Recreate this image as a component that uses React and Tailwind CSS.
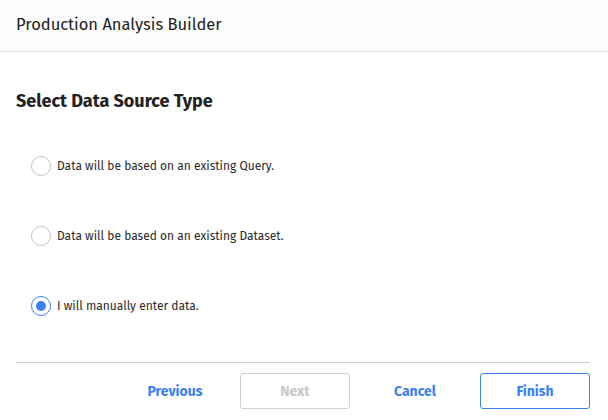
import React, { useState } from 'react';

const options = [
  { id: 'query', label: 'Data will be based on an existing Query.' },
  { id: 'dataset', label: 'Data will be based on an existing Dataset.' },
  { id: 'manual', label: 'I will manually enter data.' },
];

const Radio = ({ checked }) => (
  <span
    className={`flex h-5 w-5 shrink-0 items-center justify-center rounded-full border bg-white ${
      checked ? 'border-[#3b82f0]' : 'border-[#c4c4c4]'
    }`}
  >
    {checked && <span className="h-[10px] w-[10px] rounded-full bg-[#3b82f0]" />}
  </span>
);

const App = () => {
  const [source, setSource] = useState('manual');

  return (
    <div
      className="flex h-[420px] w-[608px] flex-col bg-white text-[#333]"
      style={{ fontFamily: '"Fira Sans", Lato, "Noto Sans", sans-serif' }}
    >
      {/* Header */}
      <div className="flex h-[52px] shrink-0 items-center border-b border-[#e8e8e8] bg-[#fdfdfd] px-4">
        <h1 className="text-[16.5px] text-[#222]">Production Analysis Builder</h1>
      </div>

      {/* Body */}
      <div className="flex-1 px-4">
        <h2 className="mt-[37px] text-[18px] leading-6 font-bold text-[#222]">Select Data Source Type</h2>
        <div className="mt-[43px] flex flex-col gap-[50px] pl-[15px]">
          {options.map((opt) => (
            <label
              key={opt.id}
              className="flex h-5 cursor-pointer items-center gap-[6px] text-[12px] text-[#2a2a2a]"
              onClick={() => setSource(opt.id)}
            >
              <Radio checked={source === opt.id} />
              <span>{opt.label}</span>
            </label>
          ))}
        </div>
      </div>

      {/* Footer */}
      <div className="ml-4 mr-[18px] mb-[11px] border-t border-[#cfcfcf] pt-[10px]">
        <div className="flex items-center justify-end gap-[10px]">
          <button className="h-9 w-[110px] text-[14px] font-bold text-[#3b82f0]">Previous</button>
          <button
            disabled
            className="h-9 w-[110px] rounded-[3px] border border-[#d0d0d0] text-[14px] font-bold text-[#c8c8c8]"
          >
            Next
          </button>
          <button className="h-9 w-[110px] text-[14px] font-bold text-[#3b82f0]">Cancel</button>
          <button className="h-9 w-[110px] rounded-[3px] border border-[#3b82f0] text-[14px] font-bold text-[#3b82f0]">
            Finish
          </button>
        </div>
      </div>
    </div>
  );
};

export default App;
